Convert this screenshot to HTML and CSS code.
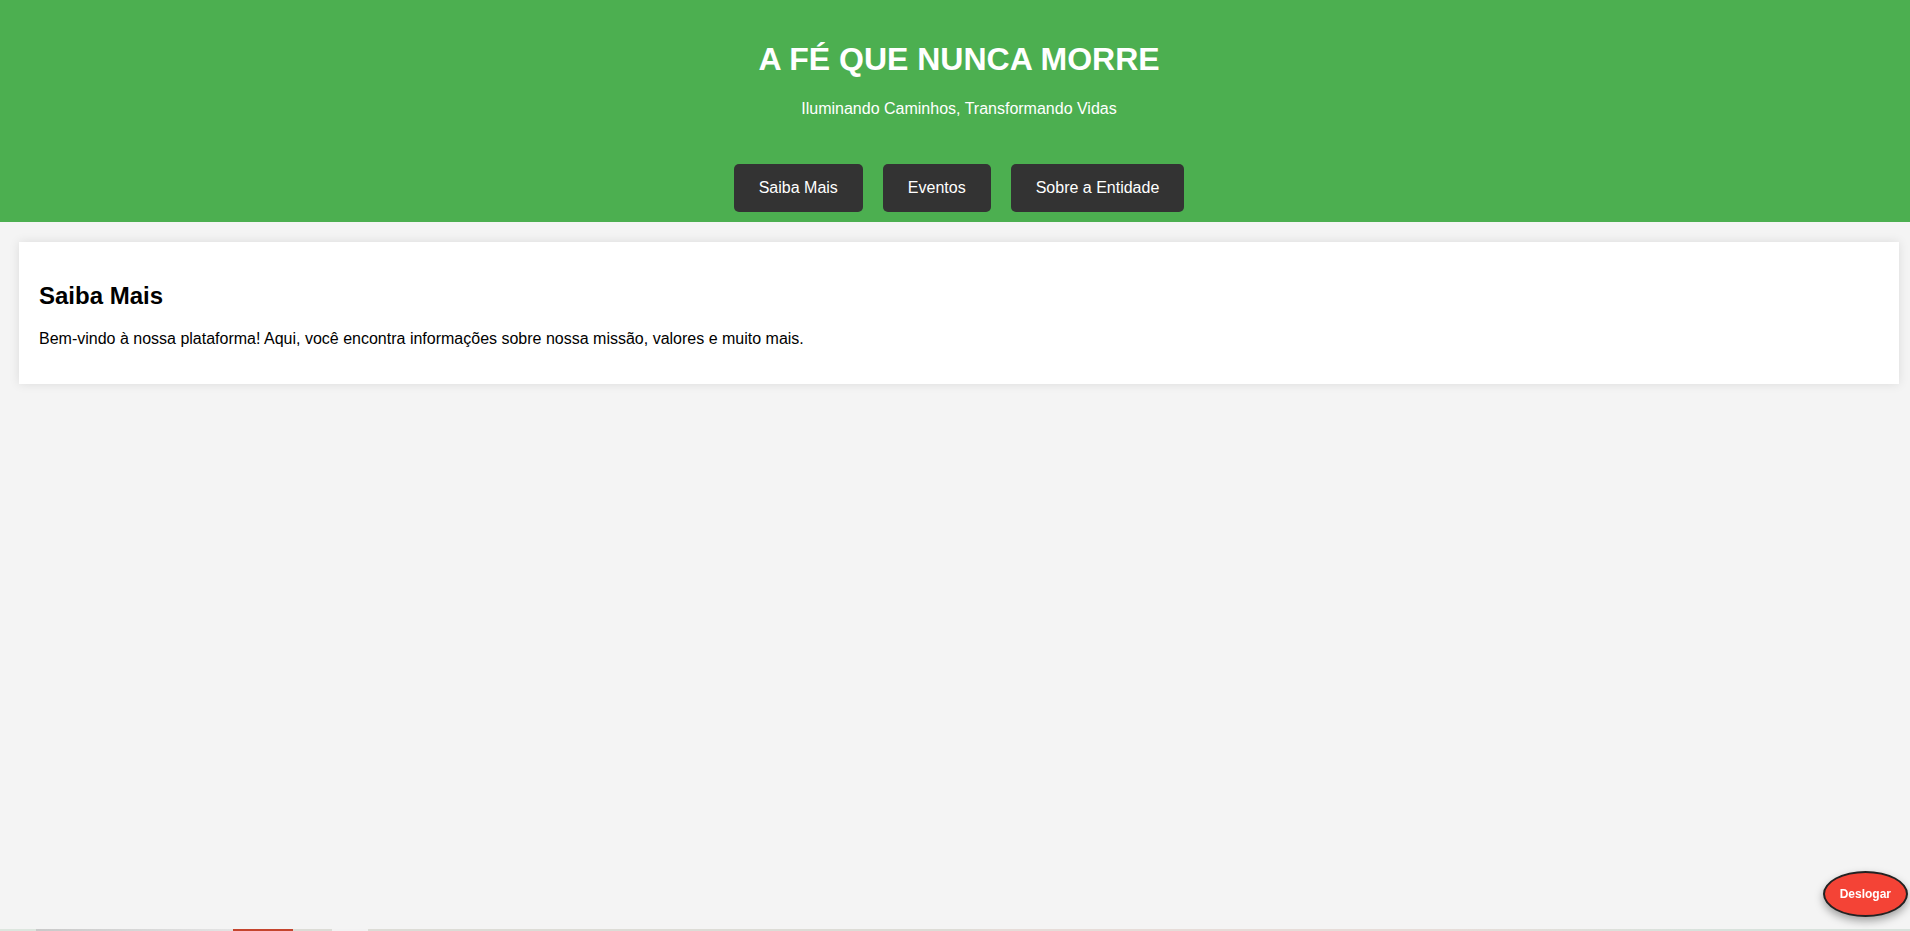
FILE: index.html
```html
<!DOCTYPE html>
<html lang="pt-BR">
<head>
<meta charset="utf-8">
<title>A Fé Que Nunca Morre</title>
<link rel="stylesheet" href="styles.css">
</head>
<body>
<header class="site-header">
  <h1 class="site-title">A FÉ QUE NUNCA MORRE</h1>
  <p class="site-tagline">Iluminando Caminhos, Transformando Vidas</p>
  <nav class="site-nav">
    <a class="nav-btn" href="#">Saiba Mais</a>
    <a class="nav-btn" href="#">Eventos</a>
    <a class="nav-btn" href="#">Sobre a Entidade</a>
  </nav>
</header>
<main class="content">
  <section class="card">
    <h2 class="card-title">Saiba Mais</h2>
    <p class="card-text">Bem-vindo à nossa plataforma! Aqui, você encontra informações sobre nossa missão, valores e muito mais.</p>
  </section>
</main>
<button class="logout-btn" type="button">Deslogar</button>
<div class="bottom-strip"></div>
</body>
</html>
```

FILE: styles.css
```css
html, body {
  margin: 0;
  padding: 0;
}

body {
  font-family: "Liberation Sans", Arial, sans-serif;
  background: #f4f4f4;
  color: #000;
  min-height: 100vh;
}

.site-header {
  background: #4caf50;
  color: #fff;
  text-align: center;
  padding: 20px 0 0 8px;
}

.site-title {
  font-size: 32px;
  font-weight: bold;
  margin: 21.44px 0;
}

.site-tagline {
  font-size: 16px;
  margin: 16px 0;
}

.site-nav {
  display: flex;
  justify-content: center;
  gap: 20px;
  padding: 30px 0 10px;
}

.nav-btn {
  display: block;
  background: #333;
  color: #fff;
  text-decoration: none;
  font-size: 16px;
  padding: 15px 25px;
  border-radius: 5px;
}

.content {
  padding: 20px 11px 0 19px;
}

.card {
  background: #fff;
  padding: 20px;
  box-shadow: 0 0 10px rgba(0, 0, 0, 0.1);
}

.card-title {
  font-size: 24px;
  font-weight: bold;
  margin: 19.92px 0;
}

.card-text {
  font-size: 16px;
  margin: 16px 0;
}

.logout-btn {
  position: fixed;
  right: 2px;
  bottom: 14px;
  background: #f44336;
  color: #fff;
  font-family: "Liberation Sans", Arial, sans-serif;
  font-size: 12px;
  font-weight: bold;
  padding: 14px 15px;
  border: 2px solid #222;
  border-radius: 50%;
  box-shadow: 0 4px 8px rgba(0, 0, 0, 0.35);
  cursor: pointer;
}

.bottom-strip {
  position: fixed;
  left: 0;
  right: 0;
  bottom: 0;
  height: 2px;
  background: linear-gradient(to right,
    #dce6de 0, #dce6de 36px,
    #c9c9c9 36px, #e4e4e4 233px,
    #c5452e 233px, #c5452e 293px,
    #dcdcd6 293px, #dcdcd6 332px,
    #f2f2f2 332px, #f2f2f2 368px,
    #dcdcd6 368px, #dddcd6 960px,
    #e6dcd8 1000px, #e6dcd8 1450px,
    #d8e2dc 1700px, #d8e2dc 100%);
}
```
